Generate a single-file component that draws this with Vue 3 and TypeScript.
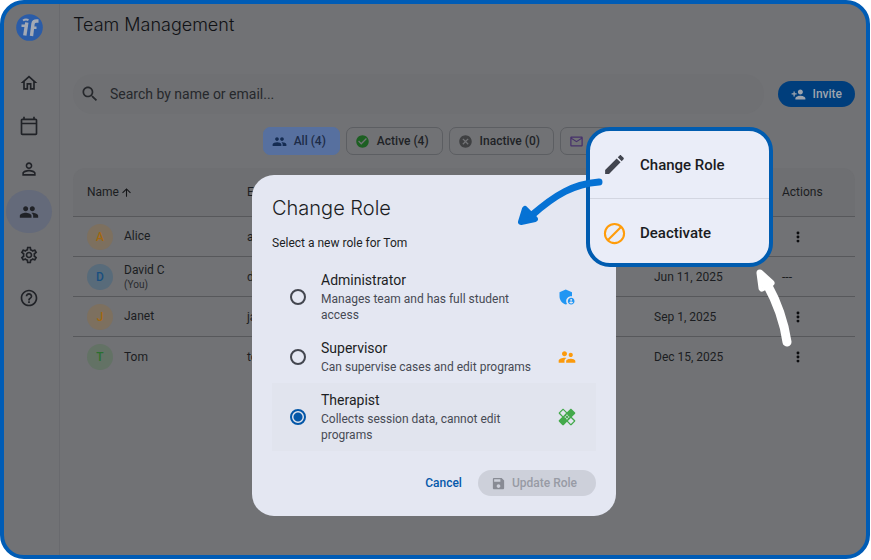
<script setup lang="ts">
import { ref } from 'vue'

interface NavItem { label: string; path: string; active?: boolean }
interface Chip { label: string; path: string; tone: string; active?: boolean }
interface Member { name: string; note?: string; email: string; joined?: string; tone: string }
interface Role { id: string; title: string; text: string; path: string; tone: string }

const people = 'M16 11c1.66 0 2.99-1.34 2.99-3S17.66 5 16 5c-1.66 0-3 1.34-3 3s1.34 3 3 3zm-8 0c1.66 0 2.99-1.34 2.99-3S9.66 5 8 5C6.34 5 5 6.34 5 8s1.34 3 3 3zm0 2c-2.33 0-7 1.17-7 3.5V19h14v-2.5c0-2.33-4.67-3.5-7-3.5zm8 0c-.29 0-.62.02-.97.05 1.16.84 1.97 1.97 1.97 3.45V19h6v-2.5c0-2.33-4.67-3.5-7-3.5z'

const nav: NavItem[] = [
  { label: 'Home', path: 'M12 5.69l5 4.5V18h-2v-6H9v6H7v-7.81l5-4.5M12 3L2 12h3v8h6v-6h2v6h6v-8h3L12 3z' },
  { label: 'Calendar', path: 'M20 3h-1V1h-2v2H7V1H5v2H4c-1.1 0-2 .9-2 2v16c0 1.1.9 2 2 2h16c1.1 0 2-.9 2-2V5c0-1.1-.9-2-2-2zm0 2v3H4V5h16zM4 21V10h16v11H4z' },
  { label: 'Students', path: 'M12 5.9c1.16 0 2.1.94 2.1 2.1s-.94 2.1-2.1 2.1S9.9 9.16 9.9 8s.94-2.1 2.1-2.1m0 9c2.97 0 6.1 1.46 6.1 2.1v1.1H5.9V17c0-.64 3.13-2.1 6.1-2.1M12 4C9.79 4 8 5.79 8 8s1.79 4 4 4 4-1.79 4-4-1.79-4-4-4zm0 9c-2.67 0-8 1.34-8 4v3h16v-3c0-2.66-5.33-4-8-4z' },
  { label: 'Team', path: people, active: true },
  { label: 'Settings', path: 'M19.43 12.98c.04-.32.07-.64.07-.98 0-.34-.03-.66-.07-.98l2.11-1.65c.19-.15.24-.42.12-.64l-2-3.46c-.09-.16-.26-.25-.44-.25-.06 0-.12.01-.17.03l-2.49 1c-.52-.4-1.08-.73-1.69-.98l-.38-2.65C14.46 2.18 14.25 2 14 2h-4c-.25 0-.46.18-.49.42l-.38 2.65c-.61.25-1.17.59-1.69.98l-2.49-1c-.06-.02-.12-.03-.18-.03-.17 0-.34.09-.43.25l-2 3.46c-.13.22-.07.49.12.64l2.11 1.65c-.04.32-.07.65-.07.98 0 .33.03.66.07.98l-2.11 1.65c-.19.15-.24.42-.12.64l2 3.46c.09.16.26.25.44.25.06 0 .12-.01.17-.03l2.49-1c.52.4 1.08.73 1.69.98l.38 2.65c.03.24.24.42.49.42h4c.25 0 .46-.18.49-.42l.38-2.65c.61-.25 1.17-.59 1.69-.98l2.49 1c.06.02.12.03.18.03.17 0 .34-.09.43-.25l2-3.46c.12-.22.07-.49-.12-.64l-2.11-1.65zm-1.98-1.71c.04.31.05.52.05.73 0 .21-.02.43-.05.73l-.14 1.13.89.7 1.08.84-.7 1.21-1.27-.51-1.04-.42-.9.68c-.43.32-.84.56-1.25.73l-1.06.43-.16 1.13-.2 1.35h-1.4l-.19-1.35-.16-1.13-1.06-.43c-.43-.18-.83-.41-1.23-.71l-.91-.7-1.06.43-1.27.51-.7-1.21 1.08-.84.89-.7-.14-1.13c-.03-.31-.05-.54-.05-.74s.02-.43.05-.73l.14-1.13-.89-.7-1.08-.84.7-1.21 1.27.51 1.04.42.9-.68c.43-.32.84-.56 1.25-.73l1.06-.43.16-1.13.2-1.35h1.39l.19 1.35.16 1.13 1.06.43c.43.18.83.41 1.23.71l.91.7 1.06-.43 1.27-.51.7 1.21-1.07.85-.89.7.14 1.13zM12 8c-2.21 0-4 1.79-4 4s1.79 4 4 4 4-1.79 4-4-1.79-4-4-4zm0 6c-1.1 0-2-.9-2-2s.9-2 2-2 2 .9 2 2-.9 2-2 2z' },
  { label: 'Help', path: 'M11 18h2v-2h-2v2zm1-16C6.48 2 2 6.48 2 12s4.48 10 10 10 10-4.48 10-10S17.52 2 12 2zm0 18c-4.41 0-8-3.59-8-8s3.59-8 8-8 8 3.59 8 8-3.59 8-8 8zm0-14c-2.21 0-4 1.79-4 4h2c0-1.1.9-2 2-2s2 .9 2 2c0 2-3 1.75-3 5h2c0-2.25 3-2.5 3-5 0-2.21-1.79-4-4-4z' },
]

const chips: Chip[] = [
  { label: 'All (4)', path: people, tone: 'navy', active: true },
  { label: 'Active (4)', path: 'M12 2C6.48 2 2 6.48 2 12s4.48 10 10 10 10-4.48 10-10S17.52 2 12 2zm-2 15l-5-5 1.41-1.41L10 14.17l7.59-7.59L19 8l-9 9z', tone: 'green' },
  { label: 'Inactive (0)', path: 'M12 2C6.47 2 2 6.47 2 12s4.47 10 10 10 10-4.47 10-10S17.53 2 12 2zm5 13.59L15.59 17 12 13.41 8.41 17 7 15.59 10.59 12 7 8.41 8.41 7 12 10.59 15.59 7 17 8.41 13.41 12 17 15.59z', tone: 'grey' },
  { label: 'Invited (0)', path: 'M20 4H4c-1.1 0-1.99.9-1.99 2L2 18c0 1.1.9 2 2 2h16c1.1 0 2-.9 2-2V6c0-1.1-.9-2-2-2zm0 14H4V8l8 5 8-5v10zm-8-7L4 6h16l-8 5z', tone: 'purple' },
]

const members: Member[] = [
  { name: 'Alice', email: 'alice', tone: 'orange' },
  { name: 'David C', note: '(You)', email: 'david', joined: 'Jun 11, 2025', tone: 'blue' },
  { name: 'Janet', email: 'janet', joined: 'Sep 1, 2025', tone: 'orange' },
  { name: 'Tom', email: 'tom', joined: 'Dec 15, 2025', tone: 'green' },
]

const roles: Role[] = [
  { id: 'admin', title: 'Administrator', text: 'Manages team and has full student access', tone: 'blue', path: 'M17 11c.34 0 .67.04 1 .09V6.27L10.5 3 3 6.27v4.91c0 4.54 3.2 8.79 7.5 9.82.55-.13 1.08-.32 1.6-.55-.69-.98-1.1-2.17-1.1-3.45 0-3.31 2.69-6 6-6zM17 13c-2.21 0-4 1.79-4 4s1.79 4 4 4 4-1.79 4-4-1.79-4-4-4zm0 1.38c.62 0 1.12.51 1.12 1.12s-.51 1.12-1.12 1.12-1.12-.51-1.12-1.12.5-1.12 1.12-1.12zm0 5.37c-.93 0-1.74-.46-2.24-1.17.05-.72 1.51-1.08 2.24-1.08s2.19.36 2.24 1.08c-.5.71-1.31 1.17-2.24 1.17z' },
  { id: 'supervisor', title: 'Supervisor', text: 'Can supervise cases and edit programs', tone: 'orange', path: 'M16.5 12c1.38 0 2.49-1.12 2.49-2.5S17.88 7 16.5 7C15.12 7 14 8.12 14 9.5s1.12 2.5 2.5 2.5zM9 11c1.66 0 2.99-1.34 2.99-3S10.66 5 9 5C7.34 5 6 6.34 6 8s1.34 3 3 3zm7.5 3c-1.83 0-5.5.92-5.5 2.75V19h11v-2.25c0-1.83-3.67-2.75-5.5-2.75zM9 13c-2.33 0-7 1.17-7 3.5V19h7v-2.25c0-.85.33-2.34 2.37-3.47C10.5 13.1 9.66 13 9 13z' },
  { id: 'therapist', title: 'Therapist', text: 'Collects session data, cannot edit programs', tone: 'green', path: 'M17.73 12.02l3.98-3.98c.39-.39.39-1.02 0-1.41l-4.34-4.34c-.39-.39-1.02-.39-1.41 0l-3.98 3.98L8 2.29C7.8 2.1 7.55 2 7.29 2c-.25 0-.51.1-.7.29L2.25 6.63c-.39.39-.39 1.02 0 1.41l3.98 3.98L2.25 16c-.39.39-.39 1.02 0 1.41l4.34 4.34c.39.39 1.02.39 1.41 0l3.98-3.98 3.98 3.98c.2.2.45.29.71.29.26 0 .51-.1.71-.29l4.34-4.34c.39-.39.39-1.02 0-1.41l-3.99-3.98zM12 9c.55 0 1 .45 1 1s-.45 1-1 1-1-.45-1-1 .45-1 1-1zm-4.71 1.96L3.66 7.34l3.63-3.63 3.62 3.62-3.62 3.63zM10 13c-.55 0-1-.45-1-1s.45-1 1-1 1 .45 1 1-.45 1-1 1zm2 2c-.55 0-1-.45-1-1s.45-1 1-1 1 .45 1 1-.45 1-1 1zm2-4c.55 0 1 .45 1 1s-.45 1-1 1-1-.45-1-1 .45-1 1-1zm2.66 9.34l-3.63-3.62 3.63-3.63 3.62 3.62-3.62 3.63z' },
]

const query = ref('')
const selected = ref('therapist')
</script>

<template>
  <div class="frame">
    <aside class="side">
      <svg class="logo" viewBox="0 0 27 27" aria-hidden="true">
        <circle cx="13.500" cy="13.500" r="13.300" fill="#2a5ca8" />
        <g fill="none" stroke="#a3a9b4" stroke-width="3.400">
          <path d="M10.800 8.500 L8.800 21.500" />
          <path d="M15.500 22 L17 9.800 Q17.500 7 20.500 7 L22.500 7" />
          <path d="M5.500 11.800 H11.500 M15 13.800 H20.500" stroke-width="2.600" />
          <path d="M7 6.500 Q9.500 4.800 12.500 6" stroke-width="2" />
        </g>
      </svg>
      <nav class="nav" aria-label="Main">
        <a v-for="n in nav" :key="n.label" href="#" class="nav-item" :class="{ active: n.active }" :aria-label="n.label">
          <svg class="icon-nav" viewBox="0 0 24 24"><path :d="n.path" /></svg>
        </a>
      </nav>
    </aside>

    <main class="main">
      <h1 class="title">Team Management</h1>

      <div class="tools">
        <label class="search">
          <svg class="icon-search" viewBox="0 0 24 24"><path d="M15.500 14h-.79l-.28-.27C15.410 12.590 16 11.110 16 9.500 16 5.910 13.090 3 9.500 3S3 5.910 3 9.500 5.910 16 9.500 16c1.610 0 3.090-.59 4.230-1.570l.27.28v.79l5 4.990L20.490 19l-4.990-5zm-6 0C7.010 14 5 11.990 5 9.500S7.010 5 9.500 5 14 7.010 14 9.500 11.990 14 9.500 14z" /></svg>
          <input v-model="query" type="text" placeholder="Search by name or email..." aria-label="Search by name or email" />
        </label>
        <button type="button" class="invite">
          <svg class="icon-sm" viewBox="0 0 24 24"><path d="M15 12c2.210 0 4-1.790 4-4s-1.790-4-4-4-4 1.790-4 4 1.790 4 4 4zm-9-2V7H4v3H1v2h3v3h2v-3h3v-2H6zm9 4c-2.670 0-8 1.340-8 4v2h16v-2c0-2.660-5.330-4-8-4z" /></svg>
          Invite
        </button>
      </div>

      <div class="chips">
        <button v-for="c in chips" :key="c.label" type="button" class="chip" :class="{ active: c.active }">
          <svg class="icon-sm" :class="'chip-' + c.tone" viewBox="0 0 24 24"><path :d="c.path" /></svg>
          {{ c.label }}
        </button>
      </div>

      <table class="members">
        <colgroup>
          <col class="col-name" /><col class="col-email" /><col class="col-joined" /><col class="col-actions" />
        </colgroup>
        <thead>
          <tr>
            <th scope="col">
              <button type="button" class="sort">
                Name
                <svg class="icon-sort" viewBox="0 0 24 24"><path d="M4 12l1.410 1.410L11 7.830V20h2V7.830l5.580 5.590L20 12l-8-8-8 8z" /></svg>
              </button>
            </th>
            <th scope="col">Email</th>
            <th scope="col"></th>
            <th scope="col">Actions</th>
          </tr>
        </thead>
        <tbody>
          <tr v-for="m in members" :key="m.name">
            <td>
              <div class="person">
                <span class="avatar" :class="'avatar-' + m.tone">{{ m.name[0] }}</span>
                <span class="who">{{ m.name }}<small v-if="m.note">{{ m.note }}</small></span>
              </div>
            </td>
            <td>{{ m.email }}</td>
            <td>{{ m.joined }}</td>
            <td>
              <span v-if="m.note">---</span>
              <button v-else type="button" class="more" :aria-label="'Actions for ' + m.name">
                <svg class="icon-more" viewBox="0 0 24 24"><circle cx="12" cy="5" r="2.500" /><circle cx="12" cy="12" r="2.500" /><circle cx="12" cy="19" r="2.500" /></svg>
              </button>
            </td>
          </tr>
        </tbody>
      </table>
    </main>

    <div class="overlay">
      <form class="dialog" role="dialog" aria-labelledby="dialog-title" @submit.prevent>
        <h2 id="dialog-title" class="dialog-title">Change Role</h2>
        <p class="dialog-sub">Select a new role for Tom</p>
        <div class="roles">
          <label v-for="r in roles" :key="r.id" class="role" :class="{ chosen: selected === r.id }">
            <input v-model="selected" type="radio" name="role" :value="r.id" />
            <span class="role-body">
              <span class="role-title">{{ r.title }}</span>
              <span class="role-text">{{ r.text }}</span>
            </span>
            <svg class="icon-role" :class="'role-' + r.tone" viewBox="0 0 24 24"><path :d="r.path" /></svg>
          </label>
        </div>
        <div class="dialog-actions">
          <button type="button" class="cancel">Cancel</button>
          <button type="submit" class="update" disabled>
            <svg class="icon-sm" viewBox="0 0 24 24"><path d="M17 3H5c-1.110 0-2 .9-2 2v14c0 1.100.89 2 2 2h14c1.100 0 2-.9 2-2V7l-4-4zm-5 16c-1.660 0-3-1.340-3-3s1.340-3 3-3 3 1.340 3 3-1.340 3-3 3zm3-10H5V5h10v4z" /></svg>
            Update Role
          </button>
        </div>
      </form>
    </div>

    <div class="menu">
      <button type="button" class="menu-item">
        <svg class="icon-menu" viewBox="0 0 24 24" fill="#42454f"><path d="M3 17.250V21h3.750L17.810 9.940l-3.750-3.750L3 17.250zM20.710 7.040c.39-.39.39-1.020 0-1.410l-2.340-2.340c-.39-.39-1.020-.39-1.410 0l-1.830 1.830 3.750 3.750 1.830-1.830z" /></svg>
        Change Role
      </button>
      <button type="button" class="menu-item">
        <svg class="icon-menu" viewBox="0 0 24 24" fill="none" stroke="#ff9c0a" stroke-width="2"><circle cx="12" cy="12" r="9.200" /><path d="M5.500 18.500L18.500 5.500" /></svg>
        Deactivate
      </button>
    </div>

    <svg class="arrow arrow-blue" viewBox="0 0 90 52" aria-hidden="true">
      <path d="M83 6C58 8 40 18 15 40" fill="none" stroke="#0672d4" stroke-width="7" stroke-linecap="round" />
      <path d="M9 33L5 46L19 43Z" fill="#0672d4" stroke="#0672d4" stroke-width="6" stroke-linejoin="round" />
    </svg>
    <svg class="arrow arrow-white" viewBox="0 0 44 84" aria-hidden="true">
      <path d="M35 76C32 55 26 38 15 18" fill="none" stroke="#fff" stroke-width="9" stroke-linecap="round" />
      <path d="M8 7L19 17L10 22Z" fill="#fff" stroke="#fff" stroke-width="7" stroke-linejoin="round" />
    </svg>
  </div>
</template>

<style>
body { background: #fff; }
</style>

<style scoped>
* { box-sizing: border-box; }
.frame {
  position: relative;
  display: flex;
  min-height: calc(100vh - 1px);
  margin-right: 1px;
  border: 4px solid #005cb5;
  border-radius: 24px;
  background: #717275;
  color: #1b1d21;
  font-family: Roboto, "Liberation Sans", sans-serif;
  font-size: 12px;
  overflow: hidden;
}
button { font-family: inherit; border: 0; background: none; padding: 0; cursor: pointer; }
svg { display: block; flex: none; }
.side { flex: none; padding: 10px 7px 0 2px; border-right: 1px solid #696a6e; }
.logo { width: 27px; height: 27px; margin: 0 auto; }
.nav { display: flex; flex-direction: column; margin-top: 20px; }
.nav-item { display: grid; place-items: center; width: 46px; height: 43px; border-radius: 22px; }
.nav-item.active { background: #646a7a; }
.icon-nav { width: 20px; height: 20px; fill: #202227; }
.main { flex: 1; min-width: 0; padding: 7px 11px 20px 13px; }
.title { margin: 0; font-family: Inter, sans-serif; font-size: 18px; line-height: 28px; font-weight: 300; color: #101114; }
.tools { display: flex; align-items: center; gap: 14px; margin-top: 35px; }
.search { flex: 1; display: flex; align-items: center; gap: 10px; height: 40px; padding: 0 7px; border-radius: 20px; background: #6f7073; }
.search input { flex: 1; min-width: 0; padding: 0; border: 0; outline: 0; background: none; font: inherit; font-size: 14px; color: #26282c; }
.search input::placeholder { color: #26282c; opacity: 1; }
.icon-search { width: 20px; height: 20px; fill: #26282c; }
.invite { display: flex; align-items: center; gap: 6px; height: 26px; padding: 0 13px; border-radius: 13px; background: #003e7c; color: #9da4ad; font-size: 12px; font-weight: 500; }
.icon-sm { width: 15px; height: 15px; fill: currentColor; }
.chips { display: flex; justify-content: center; gap: 6px; margin-top: 13px; padding-right: 6px; }
.chip { display: flex; align-items: center; gap: 7px; height: 28px; padding: 0 13px 0 8px; border: 1px solid #5c5e62; border-radius: 7px; color: #202226; font-size: 12px; font-weight: 500; white-space: nowrap; }
.chip.active { background: #57709f; border-color: #57709f; color: #1d2b47; }
.chip-navy { fill: #152c52; }
.chip-green { fill: #1d5f22; }
.chip-grey { fill: #3f4042; }
.chip-purple { fill: #46306b; }
.members { width: 100%; margin-top: 13px; border-collapse: separate; border-spacing: 0; table-layout: fixed; }
.col-name { width: 160px; }
.col-joined { width: 128px; }
.col-actions { width: 87px; }
.members th { height: 49px; padding: 0 0 0 14px; text-align: left; font-weight: 400; font-size: 12px; background: #6e6f72; border-bottom: 1px solid #57585b; }
.members th:first-child { border-top-left-radius: 12px; }
.members th:last-child { border-top-right-radius: 12px; }
.members td { height: 40px; padding: 0 0 0 14px; font-size: 12px; border-bottom: 1px solid #57585b; }
.members tr:last-child td { border-bottom: 0; }
.sort { display: flex; align-items: center; gap: 1px; font-size: 12px; color: inherit; }
.icon-sort { width: 13px; height: 13px; fill: #141518; }
.person { display: flex; align-items: center; gap: 11px; }
.avatar { display: grid; place-items: center; width: 26px; height: 26px; border-radius: 50%; font-size: 12px; font-weight: 500; }
.avatar-orange { background: #7d705f; color: #a3680f; }
.avatar-blue { background: #586b7a; color: #184f80; }
.avatar-green { background: #637265; color: #2a7030; }
.who { display: flex; flex-direction: column; line-height: 15px; }
.who small { font-size: 10px; line-height: 13px; color: #292b2f; }
.more { display: grid; place-items: center; width: 32px; height: 24px; }
.icon-more { width: 14px; height: 14px; fill: #0c0d0f; }

.overlay { position: absolute; inset: 0; display: flex; justify-content: center; align-items: flex-start; padding: 171px 2px 0 0; }
.dialog { width: 364px; padding: 20px; border-radius: 22px; background: #e4e7f2; color: #1c1e24; }
.dialog-title { margin: 0; font-family: Inter, sans-serif; font-size: 20px; line-height: 26px; font-weight: 300; }
.dialog-sub { margin: 13px 0 11px; font-size: 12px; line-height: 18px; }
.role { display: flex; align-items: center; padding: 8px 19px 8px 18px; cursor: pointer; }
.role.chosen { background: #e1e4ee; }
.role input { appearance: none; flex: none; width: 16px; height: 16px; margin: 0 15px 0 0; border: 2px solid #43464f; border-radius: 50%; }
.role input:checked { border-color: #0457a8; background: radial-gradient(circle, #0457a8 4px, transparent 5px); }
.role-body { flex: 1; display: flex; flex-direction: column; gap: 2px; padding-right: 18px; }
.role-title { font-size: 14px; line-height: 18px; }
.role-text { font-size: 12px; line-height: 16px; color: #474a54; }
.icon-role { width: 20px; height: 20px; }
.role-blue { fill: #2196f3; }
.role-orange { fill: #fb9a0c; }
.role-green { fill: #43a94b; }
.dialog-actions { display: flex; justify-content: flex-end; align-items: center; gap: 16px; margin-top: 19px; }
.cancel { color: #0659aa; font-size: 12px; font-weight: 500; }
.update { display: flex; align-items: center; gap: 6px; height: 26px; padding: 0 19px 0 13px; border-radius: 13px; background: #cdd0da; color: #989ba5; font-size: 12px; font-weight: 500; }
.update .icon-sm { fill: #888b94; }

.menu { position: absolute; top: 123px; right: 93px; width: 187px; border: 4px solid #005cb0; border-radius: 24px; background: #eaedf8; overflow: hidden; }
.menu-item { display: flex; align-items: center; gap: 13px; width: 100%; height: 67px; padding: 0 12px; color: #1a1c22; font-size: 15px; font-weight: 500; }
.menu-item + .menu-item { height: 65px; padding-top: 4px; border-top: 1px solid #d3d6e1; }
.icon-menu { width: 25px; height: 25px; }
.arrow { position: absolute; pointer-events: none; }
.arrow-blue { top: 172px; right: 260px; width: 90px; height: 52px; }
.arrow-white { top: 262px; right: 70px; width: 44px; height: 84px; }
</style>
